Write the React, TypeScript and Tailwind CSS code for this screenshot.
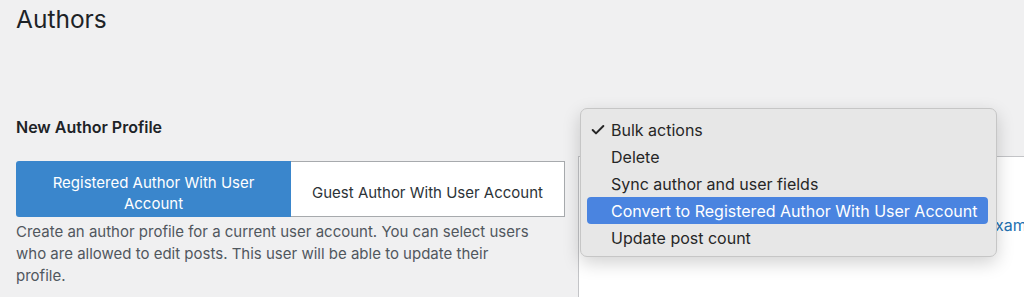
import { Check } from "lucide-react";

const actions = [
  "Bulk actions",
  "Delete",
  "Sync author and user fields",
  "Convert to Registered Author With User Account",
  "Update post count",
];

export default function App() {
  return (
    <div className="relative h-[297px] w-[1024px] overflow-hidden bg-[#f0f0f1] font-['Inter',sans-serif] text-[#1d2327]">
      <h1 className="pl-4 pt-[4px] text-[24.5px] leading-[30px] font-normal">Authors</h1>

      <div className="mt-[82px] flex">
        {/* left column */}
        <div className="w-[578px] shrink-0 pl-4 pr-[13px]">
          <h2 className="text-[16px] leading-[22px] font-semibold">New Author Profile</h2>
          <div className="mt-[23px] flex h-[56px] text-[15px] leading-[21px]">
            <button className="w-[275px] rounded-l-[3px] bg-[#3a86cc] px-6 pt-[8px] text-center text-white">
              Registered Author With User Account
            </button>
            <button className="flex-1 border border-l-0 border-[#a7aaad] bg-white px-4 pt-[7px] text-center text-[#2c3338]">
              Guest Author With User Account
            </button>
          </div>
          <p className="mt-[4px] pr-[30px] text-[15px] leading-[22px] text-[#50575e]">
            Create an author profile for a current user account. You can select users who are allowed to edit posts. This user will be able to update their profile.
          </p>
        </div>

        {/* right column: list table behind the menu */}
        <div className="flex-1 overflow-hidden pt-[40px]">
          <div className="h-[200px] border-t border-l border-[#c3c4c7] bg-white pt-[56px] pl-[407px]">
            <span className="whitespace-nowrap text-[16px] text-[#2271b1]">example</span>
          </div>
        </div>
      </div>

      {/* native select menu */}
      <div className="absolute left-[580px] top-[108px] w-[417px] rounded-[7px] border border-[#c6c6c6] bg-[#e7e7e7] pt-[7px] pb-[5px] pl-[6px] pr-[8px] shadow-[0_6px_18px_rgba(0,0,0,0.18)]">
        {actions.map((a, i) => (
          <div
            key={a}
            className={`flex h-[27px] items-center rounded-[4px] pl-[24px] text-[16px] ${
              i === 3 ? "bg-[#4a84e0] text-white" : "text-[#262626]"
            }`}
          >
            {i === 0 && <Check className="-ml-[21px] mr-[5px] h-4 w-4" strokeWidth={3} />}
            {a}
          </div>
        ))}
      </div>
    </div>
  );
}
